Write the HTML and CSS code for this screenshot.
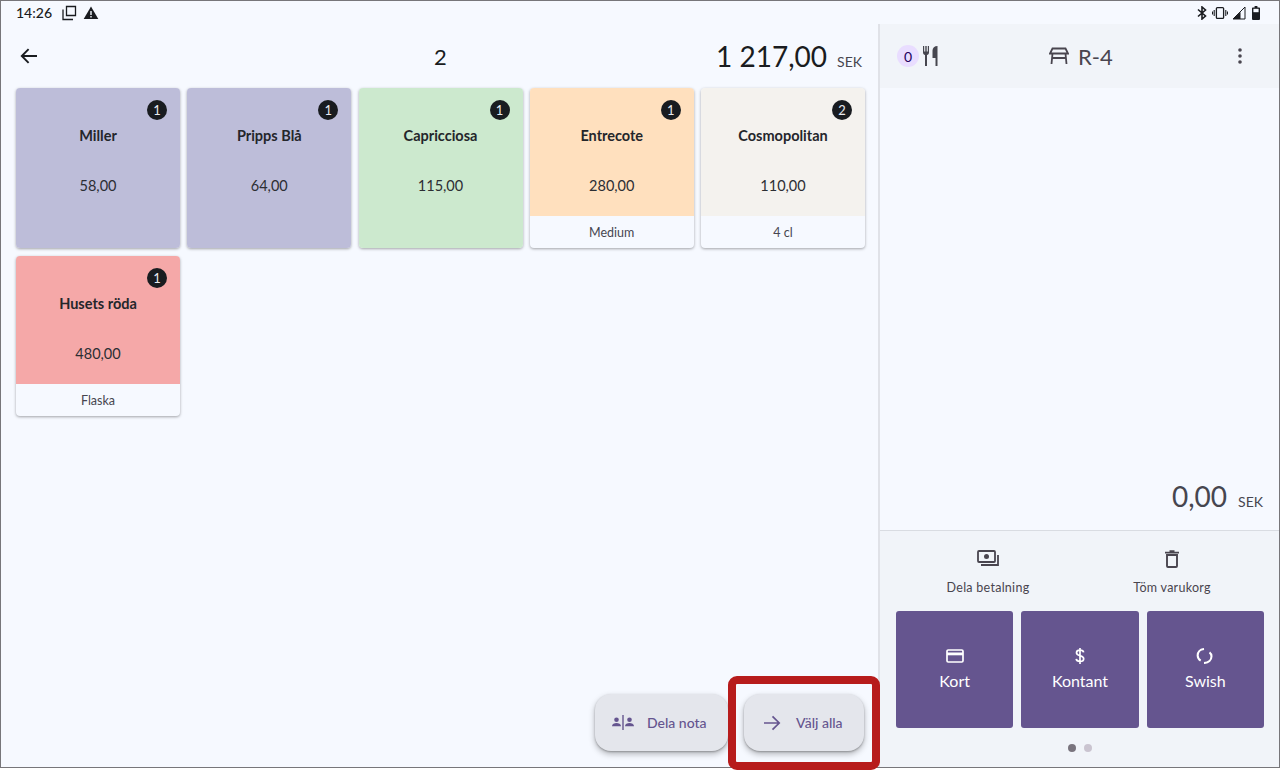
FILE: index.html
```html
<!DOCTYPE html>
<html lang="sv">
<head>
<meta charset="utf-8">
<title>Kassa</title>
<link rel="stylesheet" href="styles.css">
</head>
<body>
<div class="frame">
  <div class="status">
    <div class="status-left">
      <span class="time">14:26</span>
      <svg class="si" viewBox="0 0 16 16" width="16" height="16"><path d="M5.500 1.500h9v9h-9z" fill="none" stroke="#1a1c20" stroke-width="1.300"/><path d="M2 4.500v10h10" fill="none" stroke="#1a1c20" stroke-width="1.300"/></svg>
      <svg class="si" viewBox="0 0 16 16" width="16" height="16"><path d="M8 1.500 15.300 14H.7z" fill="#1a1c20"/><path d="M7.300 6h1.400v4H7.300zM7.300 11h1.400v1.400H7.300z" fill="#f6f9ff"/></svg>
    </div>
    <div class="status-right">
      <svg viewBox="0 0 12 14" width="12" height="14"><path d="M2 3.500 9.500 10 6 13V1l3.500 3L2 10.500" fill="none" stroke="#1a1c20" stroke-width="1.600"/></svg>
      <svg viewBox="0 0 16 14" width="16" height="14"><rect x="4.400" y="1.600" width="7.200" height="10.800" rx="1" fill="none" stroke="#1a1c20" stroke-width="1.300"/><path d="M2.200 4v6M.5 5.500v3M13.800 4v6M15.500 5.500v3" stroke="#1a1c20" stroke-width="1.100"/></svg>
      <svg viewBox="0 0 14 14" width="14" height="14"><path d="M13 1v12H1z" fill="none" stroke="#1a1c20" stroke-width="1"/><path d="M8.500 6v7H1l1-1z" fill="#1a1c20"/></svg>
      <svg class="batt" viewBox="0 0 8 14" width="8" height="14"><path d="M2.600 0h2.800v1.400H7.200a.8.8 0 0 1 .8.8V13a1 1 0 0 1-1 1H1a1 1 0 0 1-1-1V2.200a.8.8 0 0 1 .8-.8h1.800z" fill="#1a1c20"/><rect x="1.400" y="2.800" width="5.200" height="3.400" fill="#f6f9ff"/></svg>
    </div>
  </div>
  <div class="main">
    <section class="left">
      <header class="bill">
        <svg class="back" viewBox="0 0 18 16" width="18" height="16"><path d="M17 8H2M8.600 1.200 1.800 8l6.800 6.800" fill="none" stroke="#1a1c20" stroke-width="1.900"/></svg>
        <div class="bill-no">2</div>
        <div class="bill-total"><span class="big">1 217,00</span><span class="cur">SEK</span></div>
      </header>
      <div class="grid">
        <article class="card"><div class="tile lav"><span class="qty">1</span><span class="name">Miller</span><span class="price">58,00</span></div></article>
        <article class="card"><div class="tile lav"><span class="qty">1</span><span class="name">Pripps Blå</span><span class="price">64,00</span></div></article>
        <article class="card"><div class="tile green"><span class="qty">1</span><span class="name">Capricciosa</span><span class="price">115,00</span></div></article>
        <article class="card"><div class="tile peach short"><span class="qty">1</span><span class="name">Entrecote</span><span class="price">280,00</span></div><div class="variant">Medium</div></article>
        <article class="card"><div class="tile cream short"><span class="qty">2</span><span class="name">Cosmopolitan</span><span class="price">110,00</span></div><div class="variant">4 cl</div></article>
        <article class="card"><div class="tile rose short"><span class="qty">1</span><span class="name">Husets röda</span><span class="price">480,00</span></div><div class="variant">Flaska</div></article>
      </div>
      <div class="fabs">
        <button class="fab split">
          <svg viewBox="0 0 24 16" width="24" height="16"><circle cx="5.500" cy="4.800" r="2.300" fill="#65558f"/><path d="M1 11.300c0-2.200 2.400-3.300 4.500-3.300s4.500 1.100 4.500 3.300z" fill="#65558f"/><circle cx="18.500" cy="4.800" r="2.300" fill="#65558f"/><path d="M14 11.300c0-2.200 2.400-3.300 4.500-3.300s4.500 1.100 4.500 3.300z" fill="#65558f"/><path d="M12 0v15" stroke="#65558f" stroke-width="1.400"/></svg>
          <span>Dela nota</span>
        </button>
        <button class="fab all">
          <svg viewBox="0 0 18 16" width="18" height="16"><path d="M1 8h15M9.500 1.300 16.200 8l-6.700 6.700" fill="none" stroke="#65558f" stroke-width="1.700"/></svg>
          <span>Välj alla</span>
        </button>
      </div>
    </section>
    <aside class="right">
      <header class="order">
        <div class="order-left">
          <span class="zero">0</span>
          <svg viewBox="0 0 16 20" width="16" height="20"><path d="M1 0v6.500c0 1.500 1 2.300 2 2.600V20h2V9.100c1-.3 2-1.100 2-2.600V0H5.800v5.500H4.700V0H3.300v5.500H2.200V0z" fill="#46464f"/><path d="M15.500 0v20h-2v-8h-3V4.500C10.500 2 12.500 0 15.500 0z" fill="#46464f"/></svg>
        </div>
        <div class="table">
          <svg viewBox="0 0 20 18" width="20" height="18"><path d="M3.500 1.500h13L19 6.500H1zM3.500 6.500 2.500 17M16.500 6.500l1 10.500M3 11h14" fill="none" stroke="#49454f" stroke-width="1.800"/></svg>
          <span>R-4</span>
        </div>
        <svg class="more" viewBox="0 0 4 16" width="4" height="16"><circle cx="2" cy="2" r="1.800" fill="#49454f"/><circle cx="2" cy="8" r="1.800" fill="#49454f"/><circle cx="2" cy="14" r="1.800" fill="#49454f"/></svg>
      </header>
      <div class="cart">
        <div class="sum"><span class="sum-big">0,00</span><span class="cur">SEK</span></div>
      </div>
      <div class="pay">
        <div class="tools">
          <div class="tool">
            <svg viewBox="0 0 22 18" width="22" height="18"><rect x="1" y="1" width="17" height="11" rx="1" fill="none" stroke="#49454f" stroke-width="1.800"/><circle cx="9.500" cy="6.500" r="2.500" fill="#49454f"/><path d="M21 5v10H4" fill="none" stroke="#49454f" stroke-width="1.800"/></svg>
            <span>Dela betalning</span>
          </div>
          <div class="tool">
            <svg viewBox="0 0 14 18" width="14" height="18"><path d="M2 5h10v11a1 1 0 0 1-1 1H3a1 1 0 0 1-1-1z" fill="none" stroke="#49454f" stroke-width="1.900"/><path d="M0 2.600h14M4.500 1h5" stroke="#49454f" stroke-width="1.700"/></svg>
            <span>Töm varukorg</span>
          </div>
        </div>
        <div class="methods">
          <button class="method">
            <svg viewBox="0 0 18 16" width="18" height="16"><rect x="1" y="2" width="16" height="12" rx="1.200" fill="none" stroke="#fff" stroke-width="1.700"/><rect x="1" y="4.500" width="16" height="2.800" fill="#fff"/></svg>
            <span>Kort</span>
          </button>
          <button class="method">
            <svg viewBox="0 0 10 16" width="10" height="16"><path d="M8.600 4.400C8.400 2.900 7 2.200 5 2.200c-2 0-3.500 1-3.500 2.600C1.500 6.500 3 7.200 5 7.700c2.200.5 3.700 1.200 3.700 3 0 1.700-1.600 2.700-3.700 2.700-2.200 0-3.600-1-3.800-2.500M5 0v16" fill="none" stroke="#fff" stroke-width="1.700"/></svg>
            <span>Kontant</span>
          </button>
          <button class="method">
            <svg viewBox="0 0 18 16" width="18" height="16"><path d="M8 1C4 1.500 1.500 4.300 1.700 7.700c.1 2.200 1.200 3.900 3 5" fill="none" stroke="#fff" stroke-width="2.100"/><path d="M13.500 4.300c1.300 1 2 2.400 2 4 0 3.700-3 6.500-7.500 6.700" fill="none" stroke="#fff" stroke-width="2.100"/></svg>
            <span>Swish</span>
          </button>
        </div>
        <div class="dots"><i class="dot on"></i><i class="dot"></i></div>
      </div>
    </aside>
  </div>
  <div class="highlight"></div>
</div>
</body>
</html>
```
FILE: styles.css
```css
* { box-sizing: border-box; }
html, body { margin: 0; height: 100%; }
body { font-family: Lato, "Liberation Sans", sans-serif; color: #1a1c20; background: #fff; overflow: hidden; }
button { font: inherit; border: 0; padding: 0; cursor: pointer; }
.frame { position: relative; width: 1280px; height: 768px; display: flex; flex-direction: column; border: 1px solid #77767a; background: #f6f9ff; }
.status { height: 23px; flex: none; display: flex; justify-content: space-between; align-items: center; padding: 0 19px 0 15px; }
.status-left { display: flex; align-items: center; gap: 6px; }
.time { font-size: 14px; font-weight: 500; margin-right: 3px; }
.si { display: block; }
.status-right { display: flex; align-items: center; gap: 4px; }
.batt { margin-left: 2px; }
.main { flex: 1; display: flex; min-height: 0; }
.left { width: 879px; flex: none; display: flex; flex-direction: column; padding: 0 13px 16px 15px; border-right: 2px solid #e0e2e8; }
.bill { height: 64px; flex: none; display: flex; align-items: center; position: relative; padding-left: 4px; }
.back { display: block; }
.bill-no { position: absolute; left: 0; right: 0; text-align: center; font-size: 22px; }
.bill-total { margin-left: auto; position: relative; display: flex; align-items: baseline; gap: 10px; margin-right: 3px; }
.big { font-size: 28px; }
.cur { font-size: 14px; color: #46464f; }
.grid { display: grid; grid-template-columns: repeat(5, 164px); grid-auto-rows: 160px; gap: 8px 7.25px; }
.card { border-radius: 4px; overflow: hidden; background: #f6f9ff; box-shadow: 0 1px 3px rgba(0,0,0,.35); display: flex; flex-direction: column; }
.tile { position: relative; flex: 1; display: flex; flex-direction: column; align-items: center; padding-top: 39px; }
.short { flex: none; height: 128px; }
.lav { background: #bdbdd9; }
.green { background: #cce9ce; }
.peach { background: #ffe0be; }
.cream { background: #f4f2ee; }
.rose { background: #f5a8a8; }
.qty { position: absolute; top: 12px; right: 13px; width: 20px; height: 20px; border-radius: 50%; background: #191c20; color: #e9ebf0; font-size: 13px; display: flex; align-items: center; justify-content: center; }
.name { font-size: 14.500px; font-weight: 700; line-height: 18px; color: #24262b; }
.price { font-size: 14.500px; line-height: 18px; margin-top: 32px; color: #2c2e33; }
.variant { flex: 1; display: flex; align-items: center; justify-content: center; font-size: 12.500px; color: #46464f; }
.fabs { margin-top: auto; display: flex; justify-content: flex-end; gap: 16px; margin-right: 1px; }
.fab { height: 57px; border-radius: 16px; background: #e4e6ec; color: #65558f; box-shadow: 0 3px 6px rgba(0,0,0,.28), 0 1px 2px rgba(0,0,0,.25); display: flex; align-items: center; font-size: 14px; font-weight: 500; }
.split { width: 133px; padding-left: 16px; gap: 12px; }
.all { width: 120px; padding-left: 19px; gap: 15px; }
.right { flex: 1; display: flex; flex-direction: column; min-width: 0; }
.order { height: 64px; flex: none; background: #f1f4f9; display: flex; align-items: center; position: relative; padding: 0 37px 0 17px; justify-content: space-between; }
.order-left { display: flex; align-items: center; gap: 3px; }
.zero { width: 22px; height: 22px; border-radius: 50%; background: #e9ddff; color: #22005d; font-size: 14px; display: flex; align-items: center; justify-content: center; }
.table { position: absolute; left: 169px; display: flex; align-items: center; gap: 9px; font-size: 22px; color: #49454f; }
.more { display: block; }
.cart { flex: 1; display: flex; align-items: flex-end; justify-content: flex-end; padding: 0 16px 17px 0; }
.sum { display: flex; align-items: baseline; gap: 11px; }
.sum-big { font-size: 28px; color: #46464f; }
.pay { height: 237px; flex: none; background: #f1f4f9; border-top: 1px solid #d9dce2; padding: 0 15px 0 16px; display: flex; flex-direction: column; }
.tools { display: flex; height: 80px; flex: none; }
.tool { flex: 1; display: flex; flex-direction: column; align-items: center; padding-top: 19px; gap: 12px; font-size: 12.500px; letter-spacing: .27px; color: #49454f; }
.tool span { line-height: 16px; }
.methods { display: grid; grid-template-columns: repeat(3, 1fr); gap: 8px; height: 117px; flex: none; }
.method { background: #65558f; border-radius: 3px; color: #fff; display: flex; flex-direction: column; align-items: center; justify-content: center; gap: 7px; font-size: 16px; line-height: 20px; padding-bottom: 1px; }
.method svg { display: block; }
.dots { display: flex; justify-content: center; gap: 8px; margin-top: 16px; }
.dot { width: 8px; height: 8px; border-radius: 50%; background: #cac4d0; }
.dot.on { background: #79747e; }
.highlight { position: absolute; left: 727px; top: 675px; width: 152px; height: 94px; border: 8px solid #b71c1c; border-radius: 9px; pointer-events: none; }
```
